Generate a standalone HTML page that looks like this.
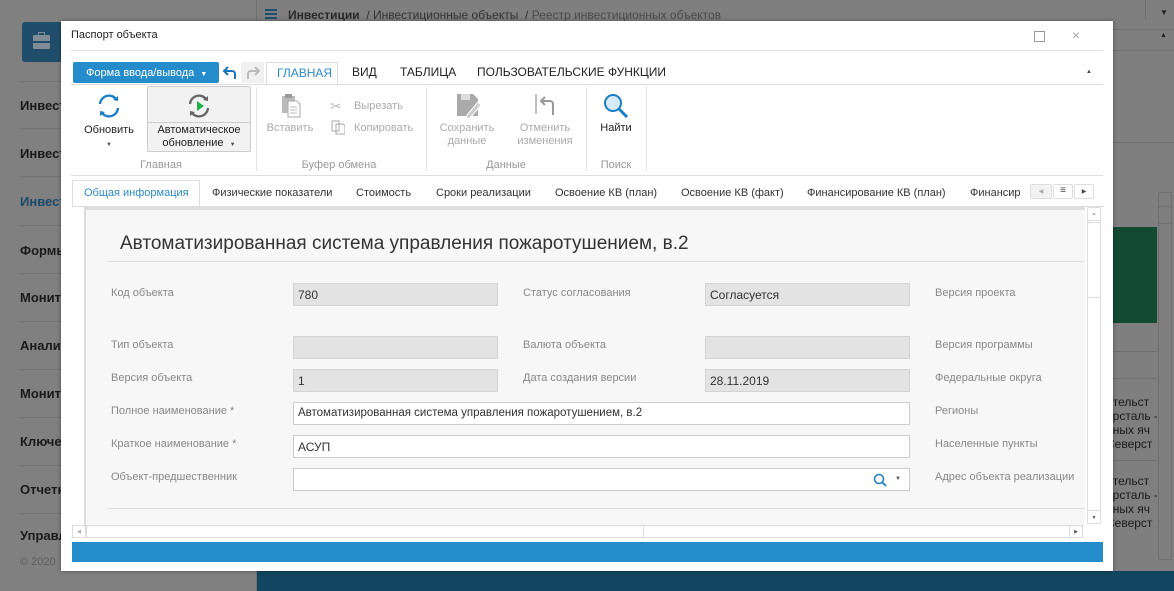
<!DOCTYPE html>
<html><head><meta charset="utf-8"><style>
*{box-sizing:border-box;margin:0;padding:0}
body{width:1174px;height:591px;overflow:hidden;position:relative;background:#7f7f7f;font-family:"Liberation Sans",Arial,sans-serif;font-size:12px;color:#333}
.a{position:absolute}
.side{left:0;top:0;width:257px;height:591px;background:#808080;border-right:1px solid #707070}
.si{position:absolute;left:20px;font-weight:bold;font-size:13px;color:#1a1a1a}
.sl{position:absolute;left:20px;width:237px;height:1px;background:#737373}
.modal{left:61px;top:21px;width:1052px;height:550px;background:#fff;box-shadow:0 0 4px rgba(0,0,0,.4)}
.lbl{position:absolute;color:#888;font-size:11px}
.inp{position:absolute;height:23px;border:1px solid #ccc;background:#fff;font-size:12px;color:#333;padding:4px 4px}
.ro{background:#e3e3e3;border-color:#d3d3d3}
.rb{position:absolute;text-align:center;font-size:11px;line-height:13px}
.gl{position:absolute;font-size:11px;color:#999;text-align:center}
.sep{position:absolute;width:1px;background:#e5e5e5;top:88px;height:84px}
.tab{position:absolute;top:187px;font-size:11px;color:#333}
</style></head><body>
<div class="a side">
 <div class="a" style="left:22px;top:22px;width:40px;height:40px;background:#1f4d6a;border-radius:3px"></div>
 <div class="a" style="left:33px;top:35px;width:17px;height:14px;background:#7f8c95;border-radius:1px"></div>
 <div class="a" style="left:38px;top:32px;width:7px;height:4px;border:1.5px solid #7f8c95;border-bottom:none"></div>
 <div class="a" style="left:33px;top:41px;width:17px;height:1.5px;background:#1f4d6a"></div>
 <div class="sl" style="top:81px"></div>
 <div class="si" style="top:98px">Инвестиции</div><div class="sl" style="top:128px"></div>
 <div class="si" style="top:146px">Инвестиции</div><div class="sl" style="top:176px"></div>
 <div class="si" style="top:194px;color:#1c4a6a">Инвестиции</div><div class="sl" style="top:225px"></div>
 <div class="si" style="top:243px">Формы</div><div class="sl" style="top:273px"></div>
 <div class="si" style="top:290px">Мониторинг</div><div class="sl" style="top:321px"></div>
 <div class="si" style="top:338px">Аналитика</div><div class="sl" style="top:369px"></div>
 <div class="si" style="top:386px">Мониторинг</div><div class="sl" style="top:417px"></div>
 <div class="si" style="top:434px">Ключевые</div><div class="sl" style="top:465px"></div>
 <div class="si" style="top:482px">Отчетность</div><div class="sl" style="top:513px"></div>
 <div class="si" style="top:528px">Управление</div>
 <div class="a" style="left:20px;top:556px;color:#5e5e5e;font-size:11px">© 2020</div>
</div>
<div class="a" style="left:258px;top:0;width:916px;height:30px;border-bottom:1px solid #707070"></div>
<div class="a" style="left:265px;top:9px;width:12px;height:2px;background:#1e4f70;box-shadow:0 4px 0 #1e4f70,0 8px 0 #1e4f70"></div>
<div class="a" style="left:288px;top:8px;font-size:12px;color:#2a2a2a"><b>Инвестиции</b> <span style="color:#333">&nbsp;/ Инвестиционные объекты &nbsp;/ </span><span style="color:#4a4a4a">Реестр инвестиционных объектов</span></div>
<div class="a" style="left:1145px;top:0;width:1px;height:20px;background:#707070"></div>
<div class="a" style="left:1160px;top:8px;font-size:8px;color:#222">▼</div>
<div class="a" style="left:1160px;top:32px;font-size:7px;color:#222">▲</div>
<div class="a" style="left:1113px;top:50px;width:61px;height:1px;background:#707070"></div>
<div class="a" style="left:1113px;top:142px;width:61px;height:1px;background:#707070"></div>
<div class="a" style="left:1113px;top:227px;width:44px;height:96px;background:#124a33"></div>
<div class="a" style="left:1113px;top:351px;width:44px;height:1px;background:#707070"></div>
<div class="a" style="left:1113px;top:378px;width:44px;height:1px;background:#707070"></div>
<div class="a" style="left:1113px;top:395px;width:44px;overflow:hidden;font-size:12px;line-height:14px;color:#1a1a1a;white-space:nowrap"><div style="margin-left:-7px">ительст<br>ерсталь -<br>йных яч<br>Северст</div></div>
<div class="a" style="left:1113px;top:460px;width:44px;height:1px;background:#707070"></div>
<div class="a" style="left:1113px;top:474px;width:44px;overflow:hidden;font-size:12px;line-height:14px;color:#1a1a1a;white-space:nowrap"><div style="margin-left:-7px">ительст<br>ерсталь -<br>йных яч<br>Северст</div></div>
<div class="a" style="left:1158px;top:192px;width:14px;height:368px;border:1px solid #6e6e6e;border-radius:2px"></div>
<div class="a" style="left:1158px;top:206px;width:14px;height:18px;border:1px solid #6e6e6e;border-radius:3px"></div>
<div class="a" style="left:257px;top:571px;width:917px;height:20px;background:#124660"></div>

<div class="a modal">
 <div class="a" style="left:10px;top:8px;font-size:11px;color:#222">Паспорт объекта</div>
 <div class="a" style="left:973px;top:10px;width:11px;height:11px;border:1px solid #999"></div>
 <div class="a" style="left:1011px;top:6px;font-size:14px;color:#aaa">×</div>
 <div class="a" style="left:10px;top:29px;width:1032px;height:1px;background:#e3e3e3"></div>
 <div class="a" style="left:12px;top:41px;width:146px;height:21px;background:#248ccb;border-radius:2px;color:#fff;font-size:11px;padding:5px 0 0 13px">Форма ввода/вывода &nbsp;<span style="font-size:7px">▼</span></div>
 <svg class="a" style="left:161px;top:45px" width="16" height="14"><path d="M13 13V8a3 3 0 0 0-3-3H3M6 1L2 5l4 4" fill="none" stroke="#1a73b8" stroke-width="2"/></svg>
 <div class="a" style="left:180px;top:41px;width:23px;height:21px;background:#f0f0f0"></div>
 <svg class="a" style="left:184px;top:45px" width="16" height="14"><path d="M3 13V8a3 3 0 0 1 3-3h7M10 1l4 4-4 4" fill="none" stroke="#bbb" stroke-width="2"/></svg>
 <div class="a" style="left:205px;top:41px;width:72px;height:23px;border:1px solid #ddd;border-bottom:none;background:#fff;color:#2a8ac8;font-size:12px;padding:3px 0 0 10px">ГЛАВНАЯ</div>
 <div class="a" style="left:291px;top:44px;font-size:12px;color:#222">ВИД</div>
 <div class="a" style="left:339px;top:44px;font-size:12px;color:#222">ТАБЛИЦА</div>
 <div class="a" style="left:416px;top:44px;font-size:12px;color:#222">ПОЛЬЗОВАТЕЛЬСКИЕ ФУНКЦИИ</div>
 <div class="a" style="left:1025px;top:48px;font-size:6px;color:#444">▲</div>
 <div class="a" style="left:10px;top:63px;width:1032px;height:1px;background:#ddd"></div>

 <svg class="a" style="left:34px;top:71px" width="28" height="28" viewBox="0 0 28 28"><path d="M5 12a9 9 0 0 1 16-5M23 16a9 9 0 0 1-16 5" fill="none" stroke="#1a7fc4" stroke-width="2.3"/><path d="M18 8l5 1 0-5zM10 20l-5-1 0 5z" fill="#1a7fc4"/></svg>
 <div class="rb" style="left:20px;top:103px;width:56px;color:#222">Обновить<br><span style="font-size:6px;color:#555">▼</span></div>
 <div class="a" style="left:86px;top:65px;width:104px;height:66px;border:1px solid #ccc;background:#f2f2f2;border-radius:2px"></div>
 <div class="a" style="left:86px;top:101px;width:104px;height:1px;background:#ccc"></div>
 <svg class="a" style="left:124px;top:71px" width="28" height="28" viewBox="0 0 28 28"><path d="M5 12a9 9 0 0 1 16-5M23 16a9 9 0 0 1-16 5" fill="none" stroke="#666" stroke-width="2.3"/><path d="M18 8l5 1 0-5zM10 20l-5-1 0 5z" fill="#666"/><path d="M12 9v10l7-5z" fill="#1fae4a"/></svg>
 <div class="rb" style="left:86px;top:103px;width:104px;color:#222">Автоматическое<br>обновление &nbsp;<span style="font-size:6px;color:#555">▼</span></div>
 <div class="gl" style="left:60px;top:138px;width:80px">Главная</div>
 <div class="sep" style="left:195px;top:66px"></div>
 <svg class="a" style="left:220px;top:73px" width="20" height="24"><rect x="1" y="2" width="13" height="17" fill="#bbb"/><rect x="4" y="0" width="7" height="4" fill="#999"/><path d="M7 7h9l3 3v13H7z" fill="#fff" stroke="#aaa"/><path d="M9 13h7M9 16h7M9 19h7" stroke="#bbb"/></svg>
 <div class="rb" style="left:204px;top:101px;width:50px;color:#aaa">Вставить</div>
 <div class="a" style="left:269px;top:77px;font-size:14px;color:#bbb">✂</div>
 <div class="a" style="left:293px;top:79px;font-size:11px;color:#aaa">Вырезать</div>
 <svg class="a" style="left:270px;top:99px" width="14" height="15"><path d="M1 1h7v10H1zM5 4h7l2 2v8H5z" fill="#fff" stroke="#aaa"/></svg>
 <div class="a" style="left:293px;top:101px;font-size:11px;color:#aaa">Копировать</div>
 <div class="gl" style="left:228px;top:138px;width:100px">Буфер обмена</div>
 <div class="sep" style="left:365px;top:66px"></div>
 <svg class="a" style="left:395px;top:72px" width="26" height="26"><path d="M1 1h16l5 5v17H1z" fill="#aaa"/><rect x="5" y="1" width="9" height="6" fill="#ddd"/><path d="M11 22l11-13 3 3-11 13-4 1z" fill="#ccc" stroke="#fff"/></svg>
 <div class="rb" style="left:373px;top:101px;width:66px;color:#aaa">Сохранить<br>данные</div>
 <svg class="a" style="left:473px;top:72px" width="22" height="24"><path d="M2 1v20" stroke="#aaa" stroke-width="1.5"/><path d="M19 22V11a3 3 0 0 0-3-3H8M11 4L7 8l4 4" fill="none" stroke="#999" stroke-width="2"/></svg>
 <div class="rb" style="left:449px;top:101px;width:70px;color:#aaa">Отменить<br>изменения</div>
 <div class="gl" style="left:405px;top:138px;width:80px">Данные</div>
 <div class="sep" style="left:525px;top:66px"></div>
 <svg class="a" style="left:541px;top:71px" width="28" height="28"><circle cx="11" cy="11" r="8" fill="#d6ebf7" stroke="#1a7fc4" stroke-width="2"/><path d="M17 17l8 8" stroke="#1a7fc4" stroke-width="3"/></svg>
 <div class="rb" style="left:530px;top:101px;width:50px;color:#222">Найти</div>
 <div class="gl" style="left:530px;top:138px;width:50px">Поиск</div>
 <div class="sep" style="left:585px;top:66px"></div>
 <div class="a" style="left:10px;top:154px;width:1032px;height:1px;background:#ddd"></div>

 <div class="a" style="left:11px;top:159px;width:128px;height:27px;border:1px solid #ddd;border-bottom:none;background:#fff"></div>
 <div class="tab" style="left:23px;top:166px;color:#2a8ac8">Общая информация</div>
 <div class="tab" style="left:151px;top:166px">Физические показатели</div>
 <div class="tab" style="left:295px;top:166px">Стоимость</div>
 <div class="tab" style="left:375px;top:166px">Сроки реализации</div>
 <div class="tab" style="left:494px;top:166px">Освоение КВ (план)</div>
 <div class="tab" style="left:620px;top:166px">Освоение КВ (факт)</div>
 <div class="tab" style="left:746px;top:166px">Финансирование КВ (план)</div>
 <div class="tab" style="left:909px;top:166px">Финансир</div>
 <div class="a" style="left:969px;top:163px;width:22px;height:15px;border:1px solid #ddd;background:#f2f2f2;border-radius:2px;font-size:6px;color:#aaa;text-align:center;padding-top:3px">◀</div>
 <div class="a" style="left:992px;top:163px;width:20px;height:15px;border:1px solid #ddd;border-radius:2px;text-align:center;font-size:10px;line-height:12px;color:#444">≡</div>
 <div class="a" style="left:1013px;top:163px;width:20px;height:15px;border:1px solid #ddd;border-radius:2px;font-size:6px;color:#444;text-align:center;padding-top:3px">▶</div>
 <div class="a" style="left:11px;top:185px;width:1032px;height:1px;background:#ddd"></div>

 <div class="a" style="left:23px;top:186px;width:1001px;height:320px;background:#f7f7f7;border-left:2px solid #ddd;border-top:3px solid #ddd"></div>
 <div class="a" style="left:59px;top:212px;font-size:19px;color:#333">Автоматизированная система управления пожаротушением, в.2</div>
 <div class="a" style="left:47px;top:240px;width:977px;height:1px;background:#ddd"></div>

 <div class="lbl" style="left:50px;top:266px">Код объекта</div>
 <div class="inp ro" style="left:232px;top:262px;width:205px">780</div>
 <div class="lbl" style="left:462px;top:266px">Статус согласования</div>
 <div class="inp ro" style="left:644px;top:262px;width:205px">Согласуется</div>
 <div class="lbl" style="left:874px;top:266px">Версия проекта</div>

 <div class="lbl" style="left:50px;top:318px">Тип объекта</div>
 <div class="inp ro" style="left:232px;top:315px;width:205px"></div>
 <div class="lbl" style="left:462px;top:318px">Валюта объекта</div>
 <div class="inp ro" style="left:644px;top:315px;width:205px"></div>
 <div class="lbl" style="left:874px;top:318px">Версия программы</div>

 <div class="lbl" style="left:50px;top:351px">Версия объекта</div>
 <div class="inp ro" style="left:232px;top:348px;width:205px">1</div>
 <div class="lbl" style="left:462px;top:351px">Дата создания версии</div>
 <div class="inp ro" style="left:644px;top:348px;width:205px">28.11.2019</div>
 <div class="lbl" style="left:874px;top:351px">Федеральные округа</div>

 <div class="lbl" style="left:50px;top:384px">Полное наименование *</div>
 <div class="inp" style="left:232px;top:381px;width:617px;font-size:11.5px">Автоматизированная система управления пожаротушением, в.2</div>
 <div class="lbl" style="left:874px;top:384px">Регионы</div>

 <div class="lbl" style="left:50px;top:417px">Краткое наименование *</div>
 <div class="inp" style="left:232px;top:414px;width:617px">АСУП</div>
 <div class="lbl" style="left:874px;top:417px">Населенные пункты</div>

 <div class="lbl" style="left:50px;top:450px">Объект-предшественник</div>
 <div class="inp" style="left:232px;top:447px;width:617px"></div>
 <svg class="a" style="left:812px;top:452px" width="14" height="14"><circle cx="6" cy="6" r="4.5" fill="none" stroke="#1a7fc4" stroke-width="1.5"/><path d="M9 9l4 4" stroke="#1a7fc4" stroke-width="1.8"/></svg>
 <div class="a" style="left:834px;top:455px;font-size:6px;color:#555">▼</div>
 <div class="lbl" style="left:874px;top:450px">Адрес объекта реализации</div>
 <div class="a" style="left:47px;top:487px;width:977px;height:1px;background:#ddd"></div>

 <div class="a" style="left:1026px;top:186px;width:14px;height:317px;border:1px solid #ddd;border-radius:2px;background:#fff"></div>
 <div class="a" style="left:1026px;top:186px;width:14px;height:14px;border:1px solid #ddd;border-radius:2px;font-size:5px;color:#aaa;text-align:center;padding-top:3px">▲</div>
 <div class="a" style="left:1026px;top:201px;width:14px;height:76px;border:1px solid #ddd;border-radius:3px"></div>
 <div class="a" style="left:1026px;top:489px;width:14px;height:14px;border:1px solid #ddd;border-radius:2px;font-size:5px;color:#555;text-align:center;padding-top:4px">▼</div>
 <div class="a" style="left:11px;top:504px;width:1011px;height:13px;border:1px solid #ddd;border-radius:2px"></div>
 <div class="a" style="left:11px;top:504px;width:14px;height:13px;border:1px solid #ddd;font-size:5px;color:#aaa;text-align:center;padding-top:3px">◀</div>
 <div class="a" style="left:25px;top:504px;width:558px;height:13px;border:1px solid #ddd;border-radius:3px"></div>
 <div class="a" style="left:1008px;top:504px;width:14px;height:13px;border:1px solid #ddd;font-size:5px;color:#555;text-align:center;padding-top:3px">▶</div>
 <div class="a" style="left:11px;top:521px;width:1031px;height:20px;background:#248ccb"></div>
</div>
</body></html>
